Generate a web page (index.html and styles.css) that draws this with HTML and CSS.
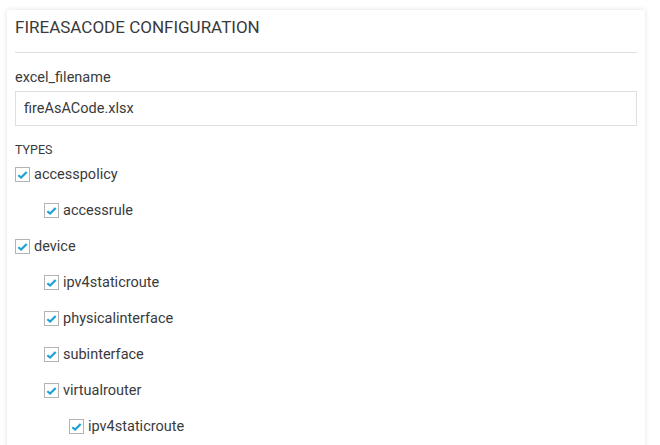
FILE: index.html
```html
<!DOCTYPE html>
<html>
<head>
<meta charset="utf-8">
<link rel="stylesheet" href="styles.css">
</head>
<body>
<div class="card">
  <div class="card-header">FIREASACODE CONFIGURATION</div>
  <div class="card-body">
    <div class="field">
      <label class="field-label">excel_filename</label>
      <div class="input">fireAsACode.xlsx</div>
    </div>
    <div class="types-label">TYPES</div>
    <ul class="tree">
      <li class="row lvl0"><span class="cb"><svg viewBox="0 0 14 14"><path d="M2.5 7.8 L5.5 10.3 L11.5 4.3"/></svg></span>accesspolicy</li>
      <li class="row lvl1"><span class="cb"><svg viewBox="0 0 14 14"><path d="M2.5 7.8 L5.5 10.3 L11.5 4.3"/></svg></span>accessrule</li>
      <li class="row lvl0"><span class="cb"><svg viewBox="0 0 14 14"><path d="M2.5 7.8 L5.5 10.3 L11.5 4.3"/></svg></span>device</li>
      <li class="row lvl1"><span class="cb"><svg viewBox="0 0 14 14"><path d="M2.5 7.8 L5.5 10.3 L11.5 4.3"/></svg></span>ipv4staticroute</li>
      <li class="row lvl1"><span class="cb"><svg viewBox="0 0 14 14"><path d="M2.5 7.8 L5.5 10.3 L11.5 4.3"/></svg></span>physicalinterface</li>
      <li class="row lvl1"><span class="cb"><svg viewBox="0 0 14 14"><path d="M2.5 7.8 L5.5 10.3 L11.5 4.3"/></svg></span>subinterface</li>
      <li class="row lvl1"><span class="cb"><svg viewBox="0 0 14 14"><path d="M2.5 7.8 L5.5 10.3 L11.5 4.3"/></svg></span>virtualrouter</li>
      <li class="row lvl2"><span class="cb"><svg viewBox="0 0 14 14"><path d="M2.5 7.8 L5.5 10.3 L11.5 4.3"/></svg></span>ipv4staticroute</li>
    </ul>
  </div>
</div>
</body>
</html>
```
FILE: styles.css
```css
html, body {
  margin: 0;
  padding: 0;
  background: #ffffff;
  font-family: Roboto, "Liberation Sans", Arial, sans-serif;
  color: #3a3a3c;
  overflow: hidden;
}
.card {
  margin: 10px 15px 0 7px;
  padding: 0 8px 20px;
  background: #fff;
  box-shadow: 0 0 5px rgba(0, 0, 0, 0.12);
  height: 460px;
}
.card-header {
  height: 43px;
  box-sizing: border-box;
  padding-top: 7px;
  font-size: 17px;
  line-height: 20px;
  border-bottom: 1px solid #dfdfdf;
}
.card-body {
  padding-top: 15px;
}
.field-label {
  display: block;
  font-size: 14.5px;
  line-height: 20px;
  margin-bottom: 3px;
}
.input {
  height: 35px;
  box-sizing: border-box;
  border: 1px solid #dfdfdf;
  padding: 0 8px;
  font-size: 14.5px;
  line-height: 33px;
}
.types-label {
  margin-top: 17px;
  font-size: 12.5px;
  line-height: 13px;
  height: 13px;
}
.tree {
  list-style: none;
  margin: 0;
  padding: 0;
}
.row {
  display: flex;
  align-items: center;
  height: 36px;
  font-size: 14.5px;
}
.lvl1 { padding-left: 29px; }
.lvl2 { padding-left: 54px; }
.cb {
  width: 15px;
  height: 15px;
  box-sizing: border-box;
  border: 1px solid #b3b3b3;
  margin: 1px 4px 0 0;
  display: inline-flex;
  background: #fff;
}
.cb svg {
  width: 13px;
  height: 13px;
  fill: none;
  stroke: #1ba1d8;
  stroke-width: 2.4;
}
```
